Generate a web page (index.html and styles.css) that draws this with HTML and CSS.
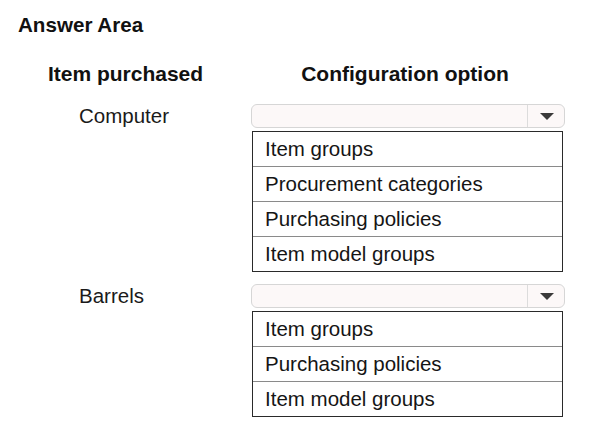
FILE: index.html
```html
<!DOCTYPE html>
<html lang="en">
<head>
<meta charset="utf-8">
<title>Answer Area</title>
<link rel="stylesheet" href="styles.css">
</head>
<body>
<main class="answer">
  <h1 class="title">Answer Area</h1>
  <div class="grid">
    <div class="col-head">Item purchased</div>
    <div class="col-head col-head-right">Configuration option</div>

    <div class="label">Computer</div>
    <div class="select-group">
      <div class="combo">
        <span class="combo-field"></span>
        <span class="combo-btn"><svg width="14" height="7" viewBox="0 0 14 7"><path d="M0 0H14L7 7Z" fill="#3a3a3a"/></svg></span>
      </div>
      <ul class="options">
        <li>Item groups</li>
        <li>Procurement categories</li>
        <li>Purchasing policies</li>
        <li>Item model groups</li>
      </ul>
    </div>

    <div class="label label-second">Barrels</div>
    <div class="select-group select-second">
      <div class="combo">
        <span class="combo-field"></span>
        <span class="combo-btn"><svg width="14" height="7" viewBox="0 0 14 7"><path d="M0 0H14L7 7Z" fill="#3a3a3a"/></svg></span>
      </div>
      <ul class="options">
        <li>Item groups</li>
        <li>Purchasing policies</li>
        <li>Item model groups</li>
      </ul>
    </div>
  </div>
</main>
</body>
</html>
```
FILE: styles.css
```css
html, body {
  margin: 0;
  padding: 0;
  background: #ffffff;
}
body {
  font-family: "Liberation Sans", Arial, sans-serif;
  color: #1a1a1a;
}
.answer {
  padding-top: 13px;
}
.title {
  margin: 0;
  padding-left: 18px;
  font-size: 20.6px;
  line-height: 24px;
  font-weight: bold;
  color: #111;
}
.grid {
  display: grid;
  grid-template-columns: 251px 314px;
  margin-top: 25px;
}
.col-head {
  font-size: 21px;
  line-height: 24px;
  font-weight: bold;
  text-align: center;
  color: #111;
  margin-bottom: 18px;
}
.col-head-right {
  padding-right: 6px;
}
.label {
  font-size: 20.5px;
  line-height: 24px;
  padding-left: 79px;
}
.label-second,
.select-second {
  margin-top: 12px;
}
.combo {
  display: flex;
  height: 24px;
  box-sizing: border-box;
  border: 1px solid #d6d6d6;
  border-radius: 6px;
  background: #fcf8f8;
}
.combo-field {
  flex: 1;
}
.combo-btn {
  width: 37px;
  border-left: 1px solid #dcdcdc;
  display: flex;
  align-items: center;
  justify-content: center;
  padding-left: 2px;
  box-sizing: border-box;
}
.options {
  list-style: none;
  margin: 3px 0 0 1px;
  padding: 0;
  width: 311px;
  box-sizing: border-box;
  border: 1px solid #2a2a2a;
}
.options li {
  height: 34px;
  line-height: 34px;
  padding-left: 12px;
  font-size: 20.5px;
  color: #151515;
}
.options li + li {
  border-top: 1px solid #8a8a8a;
}
```
